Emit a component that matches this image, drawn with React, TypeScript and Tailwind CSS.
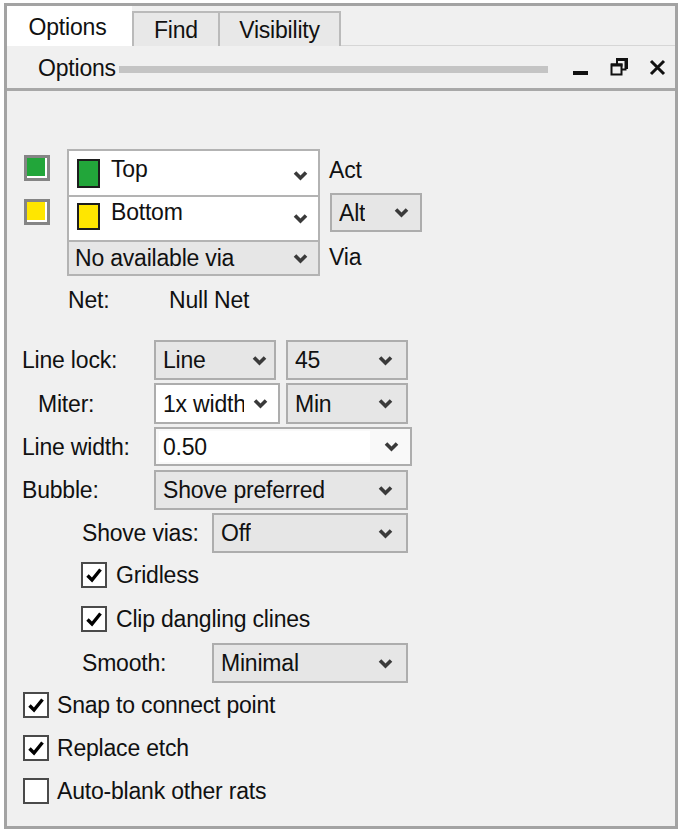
import React from "react";

function Chevron() {
  return (
    <svg width="15" height="11" viewBox="0 0 15 11" className="shrink-0">
      <polyline points="2,2.5 7.5,8 13,2.5" fill="none" stroke="#3a3a3a" strokeWidth="3.6" />
    </svg>
  );
}

function Select({
  text,
  box,
  pr = "pr-[13px]",
  textBox = "",
}: {
  text: string;
  box: string;
  pr?: string;
  textBox?: string;
}) {
  return (
    <div className={`flex items-center justify-between border-2 border-[#adadad] pl-[7px] ${pr} ${box}`}>
      <span className={`whitespace-nowrap overflow-hidden ${textBox}`}>{text}</span>
      <Chevron />
    </div>
  );
}

function Check({ checked }: { checked: boolean }) {
  return (
    <div className="w-[26px] h-[26px] border-2 border-[#4a4a4a] bg-white flex items-center justify-center shrink-0">
      {checked && (
        <svg width="20" height="20" viewBox="0 0 20 20">
          <polyline points="3.5,10.5 8,15 16.5,4.5" fill="none" stroke="#000" strokeWidth="3.4" />
        </svg>
      )}
    </div>
  );
}

function Swatch({ color }: { color: string }) {
  return (
    <div className="w-[26px] h-[26px] border-[3px] border-[#858585] bg-white">
      <div className={`w-[18px] h-[18px] ${color}`} />
    </div>
  );
}

export default function App() {
  return (
    <div className="w-[682px] h-[832px] bg-white pt-[3px] pl-[4px] font-['Liberation_Sans',Arial,sans-serif] text-[23px] tracking-[-0.2px] leading-[26px] text-[#111]">
      <div className="w-[674px] h-[826px] border-[3px] border-[#a3a3a3] bg-[#f0f0f0] flex flex-col">
        {/* Tab strip */}
        <div className="h-[40px] flex items-end shrink-0">
          <div className="h-[40px] w-[125px] bg-white flex items-center justify-center pr-[4px] pt-[1px]">Options</div>
          <div className="h-[35px] w-[88px] border-2 border-b-0 border-[#bababa] bg-[#e8e8e8] flex items-center justify-center">
            Find
          </div>
          <div className="h-[35px] w-[121px] border-2 border-b-0 border-l-0 border-[#bababa] bg-[#e8e8e8] flex items-center justify-center">
            Visibility
          </div>
          <div className="flex-1 h-full border-b border-[#d6d6d6]" />
        </div>
        {/* Title bar */}
        <div className="h-[45px] shrink-0 flex items-center border-b-[3px] border-[#a8a8a8] pl-[31px]">
          <span className="pt-[1px]">Options</span>
          <div className="ml-[3px] w-[429px] h-[7px] bg-[#c4c4c4] mt-[4px]" />
          <div className="ml-[25px] w-[15px] h-[4px] bg-[#111] mt-[11px]" />
          <svg width="18" height="18" viewBox="0 0 18 18" className="ml-[22px] mt-[-1px]">
            <path d="M6 1.5 H16.5 V11" fill="none" stroke="#111" strokeWidth="3" />
            <path d="M7 1 V6" fill="none" stroke="#111" strokeWidth="2" />
            <path d="M15.5 2 V11.5 H12" fill="none" stroke="#111" strokeWidth="2" />
            <rect x="1.5" y="6.5" width="10" height="10" fill="#f0f0f0" stroke="#111" strokeWidth="2" />
            <path d="M1 7 H12.5" stroke="#111" strokeWidth="3" />
          </svg>
          <svg width="17" height="17" viewBox="0 0 17 17" className="ml-[21px]">
            <path d="M2 2 L15 15 M15 2 L2 15" stroke="#111" strokeWidth="3" />
          </svg>
        </div>

        {/* Content */}
        <div className="flex flex-col">
          {/* Layers block */}
          <div className="mt-[58px] pl-[17px] flex">
            <div className="w-[26px] flex flex-col">
              <div className="mt-[6px]">
                <Swatch color="bg-[#22a63a]" />
              </div>
              <div className="mt-[18px]">
                <Swatch color="bg-[#ffe600]" />
              </div>
            </div>
            <div className="ml-[17px] w-[253px] border-2 border-[#b3b3b3] flex flex-col">
              <div className="h-[44px] bg-white flex items-center pl-[8px] pr-[10px]">
                <div className="w-[23px] h-[29px] bg-[#22a63a] border-2 border-[#1d1d1d]" />
                <span className="ml-[11px] pb-[8px] flex-1">Top</span>
                <div className="mt-[4px]">
                  <Chevron />
                </div>
              </div>
              <div className="h-[45px] border-t-2 border-[#b3b3b3] bg-white flex items-center pl-[8px] pr-[10px]">
                <div className="w-[23px] h-[27px] bg-[#ffe600] border-2 border-[#1d1d1d] mb-[4px]" />
                <span className="ml-[11px] pb-[13px] flex-1">Bottom</span>
                <Chevron />
              </div>
              <div className="h-[34px] border-t-2 border-[#b3b3b3] bg-[#e6e6e6] flex items-center pl-[6px] pr-[10px]">
                <span className="flex-1">No available via</span>
                <Chevron />
              </div>
            </div>
            <div className="ml-[9px] flex flex-col">
              <div className="h-[46px] flex items-center pb-[4px]">Act</div>
              <Select text="Alt" box="-mt-[2px] ml-[1px] w-[92px] h-[39px] bg-[#e6e6e6]" pr="pr-[11px]" />
              <div className="mt-[12px] h-[26px]">Via</div>
            </div>
          </div>

          {/* Net */}
          <div className="mt-[11px] h-[26px] pl-[61px] flex items-center">
            <span className="w-[101px]">Net:</span>
            <span>Null Net</span>
          </div>

          {/* Form rows */}
          <div className="mt-[27px] pl-[15px] flex items-center h-[40px]">
            <span className="w-[132px]">Line lock:</span>
            <Select text="Line" box="w-[122px] h-[40px] bg-[#e6e6e6]" pr="pr-[7px]" />
            <Select text="45" box="ml-[10px] w-[122px] h-[40px] bg-[#e6e6e6]" />
          </div>
          <div className="mt-[3px] pl-[31px] flex items-center h-[41px]">
            <span className="w-[116px]">Miter:</span>
            <Select
              text="1x width"
              box="w-[126px] h-[41px] bg-white"
              pr="pr-[10px]"
              textBox="w-[81px]"
            />
            <Select text="Min" box="ml-[6px] w-[122px] h-[41px] bg-[#e6e6e6]" />
          </div>
          <div className="mt-[3px] pl-[15px] flex items-center h-[39px]">
            <span className="w-[132px]">Line width:</span>
            <div className="w-[258px] h-[39px] border-2 border-[#adadad] bg-[#f9f9f9] flex items-center pl-[3px] pr-[11px]">
              <div className="w-[211px] h-[31px] bg-white flex items-center pl-[4px]">0.50</div>
              <div className="flex-1" />
              <Chevron />
            </div>
          </div>
          <div className="mt-[4px] pl-[15px] flex items-center h-[40px]">
            <span className="w-[132px]">Bubble:</span>
            <Select text="Shove preferred" box="w-[254px] h-[40px] bg-[#e6e6e6]" />
          </div>
          <div className="mt-[3px] pl-[75px] flex items-center h-[40px]">
            <span className="w-[130px]">Shove vias:</span>
            <Select text="Off" box="w-[196px] h-[40px] bg-[#e6e6e6]" />
          </div>
          <div className="mt-[9px] pl-[74px] flex items-center h-[26px]">
            <Check checked />
            <span className="ml-[9px]">Gridless</span>
          </div>
          <div className="mt-[18px] pl-[74px] flex items-center h-[26px]">
            <Check checked />
            <span className="ml-[9px]">Clip dangling clines</span>
          </div>
          <div className="mt-[11px] pl-[75px] flex items-center h-[40px]">
            <span className="w-[130px]">Smooth:</span>
            <Select text="Minimal" box="w-[196px] h-[40px] bg-[#e6e6e6]" />
          </div>
          <div className="mt-[9px] pl-[16px] flex items-center h-[26px]">
            <Check checked />
            <span className="ml-[8px]">Snap to connect point</span>
          </div>
          <div className="mt-[17px] pl-[16px] flex items-center h-[26px]">
            <Check checked />
            <span className="ml-[8px]">Replace etch</span>
          </div>
          <div className="mt-[17px] pl-[16px] flex items-center h-[26px]">
            <Check checked={false} />
            <span className="ml-[8px]">Auto-blank other rats</span>
          </div>
        </div>
      </div>
    </div>
  );
}
